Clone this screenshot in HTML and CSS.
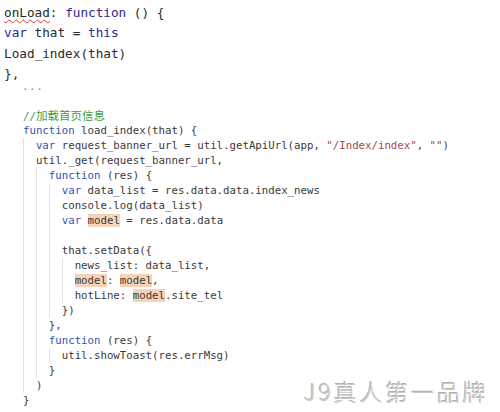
FILE: index.html
```html
<!DOCTYPE html>
<html>
<head>
<meta charset="utf-8">
<link rel="stylesheet" href="styles.css">
</head>
<body>
<div class="page">
  <div class="top">
    <div class="ln"><span class="sq">onLoad</span>: <span class="kw">function</span> () {</div>
    <div class="ln"><span class="kw">var</span> that = <span class="kw">this</span></div>
    <div class="ln">Load_index(that)</div>
    <div class="ln">},</div>
  </div>
  <div class="dots">...</div>
  <div class="code">
    <div class="ln"><span class="cm">//<span class="cjk">加载首页信息</span></span></div>
    <div class="ln"><span class="kw">function</span> load_index(that) {</div>
    <div class="blk">
      <div class="ln"><span class="kw">var</span> request_banner_url = util.getApiUrl(app, <span class="str">"/Index/index"</span>, <span class="str">""</span>)</div>
      <div class="ln">util._get(request_banner_url,</div>
      <div class="blk">
        <div class="ln"><span class="kw">function</span> (res) {</div>
        <div class="blk">
          <div class="ln"><span class="kw">var</span> data_list = res.data.data.index_news</div>
          <div class="ln">console.log(data_list)</div>
          <div class="ln"><span class="kw">var</span> <span class="hl">model</span> = res.data.data</div>
          <div class="ln">&nbsp;</div>
          <div class="ln">that.setData({</div>
          <div class="blk">
            <div class="ln">news_list: data_list,</div>
            <div class="ln"><span class="hl">model</span>: <span class="hl">model</span>,</div>
            <div class="ln">hotLine: <span class="hl">model</span>.site_tel</div>
          </div>
          <div class="ln">})</div>
        </div>
        <div class="ln">},</div>
        <div class="ln"><span class="kw">function</span> (res) {</div>
        <div class="blk">
          <div class="ln">util.showToast(res.errMsg)</div>
        </div>
        <div class="ln">}</div>
      </div>
      <div class="ln">)</div>
    </div>
    <div class="ln">}</div>
  </div>
  <div class="mark">J9真人第一品牌</div>
</div>
</body>
</html>
```
FILE: styles.css
```css
html, body {
  margin: 0;
  padding: 0;
  background: #ffffff;
}
.page {
  position: relative;
  width: 500px;
  height: 412px;
  overflow: hidden;
  color: #333333;
  font-family: "DejaVu Sans Mono", "Liberation Mono", "Noto Sans CJK SC", monospace;
}
.ln {
  white-space: pre;
}
.top {
  padding: 3px 0 0 4px;
  font-size: 12.7px;
  line-height: 20.4px;
  color: #2a2a2a;
}
.top .ln {
  height: 20.4px;
}
.top .kw {
  color: #2b2b8e;
}
.sq {
  text-decoration: underline wavy #d33;
  text-decoration-thickness: 1px;
  text-underline-offset: 2px;
  text-decoration-skip-ink: none;
}
.dots {
  margin: -4px 0 0 22px;
  font-size: 11px;
  line-height: 12px;
  height: 12px;
  letter-spacing: 0.5px;
  color: #8a8a8a;
}
.code {
  padding: 15px 0 0 23px;
  font-size: 10.72px;
  line-height: 15px;
  color: #3a3a3a;
}
.code .ln {
  height: 15px;
}
.blk {
  border-left: 1px solid #e2e2e2;
  padding-left: calc(2ch - 1px);
}
.kw {
  color: #3452b0;
}
.str {
  color: #a64848;
}
.cm {
  color: #3e9e3e;
}
.cjk {
  font-family: "Noto Sans CJK SC", sans-serif;
  font-size: 11.5px;
}
.hl {
  background: #f7d2b6;
}
.mark {
  position: absolute;
  left: 304px;
  top: 375px;
  font-family: "Noto Sans CJK SC", sans-serif;
  font-weight: 300;
  font-size: 23px;
  line-height: 32px;
  letter-spacing: 2.8px;
  color: #c8c8c8;
  text-shadow: 1px 1px 0 #ffffff, -1px -1px 0 #b0b0b0;
  white-space: nowrap;
}
```
